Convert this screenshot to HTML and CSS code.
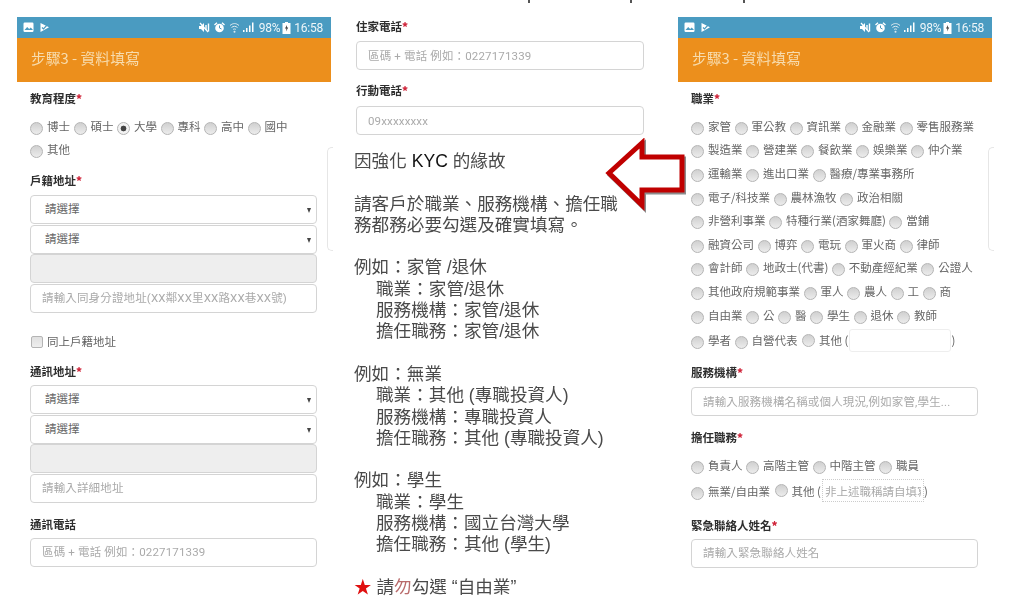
FILE: index.html
```html
<!DOCTYPE html>
<html lang="zh-Hant">
<head>
<meta charset="utf-8">
<title>步驟3 - 資料填寫</title>
<link rel="stylesheet" href="styles.css">
</head>
<body>
<svg class="defs" aria-hidden="true">
  <symbol id="status-left" viewBox="0 0 32 11">
    <rect x="0.5" y="0.5" width="10" height="9.5" rx="1.2" fill="#fff"/>
    <path d="M1.5 8l2.7-3 2 2 1.6-1.4L10 8z" fill="#4a9bc1"/>
    <path d="M17.5 1l8.5 4.3-8.5 4.7z" fill="#fff"/>
    <path d="M19 5.5l1.5 1.5 4-4.500" fill="none" stroke="#4a9bc1" stroke-width="1.2"/>
  </symbol>
  <symbol id="status-right" viewBox="0 0 55 11">
    <path d="M0 4h2l3-3v9L2 7H0z" fill="#fff"/>
    <path d="M1 1l8 9" stroke="#fff" stroke-width="1.2"/>
    <path d="M7 3v5M9.5 1.500v8" stroke="#fff" stroke-width="1.4"/>
    <circle cx="20.5" cy="6" r="4.3" fill="#fff"/>
    <path d="M20.5 3.500V6l2 1" stroke="#4a9bc1" fill="none"/>
    <path d="M15.5 3l2.500-2.300M25.500 3L23 .7" stroke="#fff" stroke-width="1.4"/>
    <path d="M31 3.500c3-2.600 6-2.600 9 0M32.500 5.500c2-1.600 4-1.600 6 0M34 7.500c1-.7 2-.7 3 0" fill="none" stroke="#dbe9ef" stroke-width="1"/>
    <circle cx="35.500" cy="9.700" r="1" fill="#dbe9ef"/>
    <path d="M44 10h1.500V8H44zM47 10h1.500V6H47zM50 10h1.500V3.500H50zM53 10h1.500V.5H53z" fill="#fff"/>
  </symbol>
  <symbol id="battery" viewBox="0 0 9 12">
    <path d="M3 0h3v1h2.500v11H.5V1H3z" fill="#fff"/>
    <path d="M5 3L3 6.500h1.500L4 9.500l2.200-4H4.800z" fill="#333"/>
  </symbol>
</svg>

<span class="cut-mark cut-a"></span>
<span class="cut-mark cut-b"></span>
<span class="cut-mark cut-c"></span>

<main class="page">
  <section class="phone">
    <div class="status">
      <svg class="ico-left"><use href="#status-left"/></svg>
      <svg class="ico-right"><use href="#status-right"/></svg>
      <span class="status-pct">98%</span>
      <svg class="ico-batt"><use href="#battery"/></svg>
      <span class="status-time">16:58</span>
    </div>
    <header class="appbar">步驟3 - 資料填寫</header>
    <div class="form">
      <div class="label first">教育程度<b>*</b></div>
      <div class="options">
        <div class="row">
          <label class="opt"><input type="radio" name="edu">博士</label>
          <label class="opt"><input type="radio" name="edu">碩士</label>
          <label class="opt"><input type="radio" name="edu" checked>大學</label>
          <label class="opt"><input type="radio" name="edu">專科</label>
          <label class="opt"><input type="radio" name="edu">高中</label>
          <label class="opt"><input type="radio" name="edu">國中</label>
        </div>
        <div class="row"><label class="opt"><input type="radio" name="edu">其他</label></div>
      </div>
      <div class="label sec-a">戶籍地址<b>*</b></div>
      <div class="select">請選擇</div>
      <div class="select">請選擇</div>
      <div class="filled"></div>
      <input class="field" placeholder="請輸入同身分證地址(XX鄰XX里XX路XX巷XX號)">
      <label class="check"><input type="checkbox">同上戶籍地址</label>
      <div class="label sec-b">通訊地址<b>*</b></div>
      <div class="select">請選擇</div>
      <div class="select">請選擇</div>
      <div class="filled"></div>
      <input class="field" placeholder="請輸入詳細地址">
      <div class="label sec-c">通訊電話</div>
      <input class="field" placeholder="區碼 + 電話 例如：0227171339">
    </div>
    <span class="ghost"></span>
  </section>

  <section class="middle">
    <div class="label mid-first">住家電話<b>*</b></div>
    <input class="field" placeholder="區碼 + 電話 例如：0227171339">
    <div class="label mid-second">行動電話<b>*</b></div>
    <input class="field" placeholder="09xxxxxxxx">
    <div class="notice">
      <p>因強化 <span class="strong">KYC</span> 的緣故</p>
      <p class="blank"></p>
      <p>請客戶於職業、服務機構、擔任職務都務必要勾選及確實填寫。</p>
      <p class="blank"></p>
      <p>例如：家管 /退休</p>
      <p class="sub">職業：家管/退休</p>
      <p class="sub">服務機構：家管/退休</p>
      <p class="sub">擔任職務：家管/退休</p>
      <p class="blank"></p>
      <p>例如：無業</p>
      <p class="sub">職業：其他 (專職投資人)</p>
      <p class="sub">服務機構：專職投資人</p>
      <p class="sub">擔任職務：其他 (專職投資人)</p>
      <p class="blank"></p>
      <p>例如：學生</p>
      <p class="sub">職業：學生</p>
      <p class="sub">服務機構：國立台灣大學</p>
      <p class="sub">擔任職務：其他 (學生)</p>
      <p class="blank"></p>
      <p><span class="star">★</span> 請<span class="warn">勿</span>勾選 “自由業”</p>
    </div>
  </section>

  <section class="phone">
    <div class="status">
      <svg class="ico-left"><use href="#status-left"/></svg>
      <svg class="ico-right"><use href="#status-right"/></svg>
      <span class="status-pct">98%</span>
      <svg class="ico-batt"><use href="#battery"/></svg>
      <span class="status-time">16:58</span>
    </div>
    <header class="appbar">步驟3 - 資料填寫</header>
    <div class="form">
      <div class="label first">職業<b>*</b></div>
      <div class="options">
        <div class="row">
          <label class="opt"><input type="radio" name="job">家管</label>
          <label class="opt"><input type="radio" name="job">軍公教</label>
          <label class="opt"><input type="radio" name="job">資訊業</label>
          <label class="opt"><input type="radio" name="job">金融業</label>
          <label class="opt"><input type="radio" name="job">零售服務業</label>
        </div>
        <div class="row">
          <label class="opt"><input type="radio" name="job">製造業</label>
          <label class="opt"><input type="radio" name="job">營建業</label>
          <label class="opt"><input type="radio" name="job">餐飲業</label>
          <label class="opt"><input type="radio" name="job">娛樂業</label>
          <label class="opt"><input type="radio" name="job">仲介業</label>
        </div>
        <div class="row">
          <label class="opt"><input type="radio" name="job">運輸業</label>
          <label class="opt"><input type="radio" name="job">進出口業</label>
          <label class="opt"><input type="radio" name="job">醫療/專業事務所</label>
        </div>
        <div class="row">
          <label class="opt"><input type="radio" name="job">電子/科技業</label>
          <label class="opt"><input type="radio" name="job">農林漁牧</label>
          <label class="opt"><input type="radio" name="job">政治相關</label>
        </div>
        <div class="row">
          <label class="opt"><input type="radio" name="job">非營利事業</label>
          <label class="opt"><input type="radio" name="job">特種行業(酒家舞廳)</label>
          <label class="opt"><input type="radio" name="job">當鋪</label>
        </div>
        <div class="row">
          <label class="opt"><input type="radio" name="job">融資公司</label>
          <label class="opt"><input type="radio" name="job">博弈</label>
          <label class="opt"><input type="radio" name="job">電玩</label>
          <label class="opt"><input type="radio" name="job">軍火商</label>
          <label class="opt"><input type="radio" name="job">律師</label>
        </div>
        <div class="row">
          <label class="opt"><input type="radio" name="job">會計師</label>
          <label class="opt"><input type="radio" name="job">地政士(代書)</label>
          <label class="opt"><input type="radio" name="job">不動產經紀業</label>
          <label class="opt"><input type="radio" name="job">公證人</label>
        </div>
        <div class="row">
          <label class="opt"><input type="radio" name="job">其他政府規範事業</label>
          <label class="opt"><input type="radio" name="job">軍人</label>
          <label class="opt"><input type="radio" name="job">農人</label>
          <label class="opt"><input type="radio" name="job">工</label>
          <label class="opt"><input type="radio" name="job">商</label>
        </div>
        <div class="row">
          <label class="opt"><input type="radio" name="job">自由業</label>
          <label class="opt"><input type="radio" name="job">公</label>
          <label class="opt"><input type="radio" name="job">醫</label>
          <label class="opt"><input type="radio" name="job">學生</label>
          <label class="opt"><input type="radio" name="job">退休</label>
          <label class="opt"><input type="radio" name="job">教師</label>
        </div>
        <div class="row tall">
          <label class="opt"><input type="radio" name="job">學者</label>
          <label class="opt"><input type="radio" name="job">自營代表</label>
          <label class="opt raised"><input type="radio" name="job">其他 (<input class="inline-field" type="text">)</label>
        </div>
      </div>
      <div class="label sec-d">服務機構<b>*</b></div>
      <input class="field" placeholder="請輸入服務機構名稱或個人現況,例如家管,學生...">
      <div class="label sec-c">擔任職務<b>*</b></div>
      <div class="options role">
        <div class="row">
          <label class="opt"><input type="radio" name="role">負責人</label>
          <label class="opt"><input type="radio" name="role">高階主管</label>
          <label class="opt"><input type="radio" name="role">中階主管</label>
          <label class="opt"><input type="radio" name="role">職員</label>
        </div>
        <div class="row tall">
          <label class="opt"><input type="radio" name="role">無業/自由業</label>
          <label class="opt raised"><input type="radio" name="role">其他 (<input class="inline-field dotted" type="text" placeholder="非上述職稱請自填寫">)</label>
        </div>
      </div>
      <div class="label sec-e">緊急聯絡人姓名<b>*</b></div>
      <input class="field" placeholder="請輸入緊急聯絡人姓名">
    </div>
    <span class="ghost"></span>
  </section>
</main>

<svg class="arrow" viewBox="0 0 84 76" aria-hidden="true">
  <polygon points="5,35 38,5 38,19 78,19 78,52 38,52 38,67" fill="#fff" stroke="#8c8c8c" stroke-width="5" transform="translate(1.500 2)"/>
  <polygon points="5,35 38,5 38,19 78,19 78,52 38,52 38,67" fill="#fff" stroke="#c00000" stroke-width="5"/>
</svg>
</body>
</html>
```
FILE: styles.css
```css
* { box-sizing: border-box; }
html, body { margin: 0; height: 598px; overflow: hidden; background: #fff; }
body {
  font-family: "Noto Sans CJK TC", "Liberation Sans", sans-serif;
  font-size: 11.5px;
  color: #555;
  position: relative;
}
.defs { position: absolute; width: 0; height: 0; }
.page { display: flex; align-items: flex-start; height: 598px; filter: blur(.35px); }

.phone { width: 314px; margin-left: 17px; padding-top: 17px; position: relative; flex: none; }
.phone + .middle + .phone { margin-left: 0; }

.status {
  height: 21px;
  background: #4a9bc1;
  color: #eef6f9;
  display: flex;
  align-items: center;
  font-family: Roboto, sans-serif;
  font-size: 12px;
  letter-spacing: -.25px;
  padding-left: 6px;
}
.ico-left { width: 32px; height: 11px; }
.ico-right { width: 55px; height: 11px; margin-left: auto; }
.status-pct { margin-left: 5px; }
.ico-batt { width: 9px; height: 12px; margin-left: 2px; }
.status-time { margin: 0 8px 0 3px; }

.appbar {
  height: 44px;
  background: #ec8f1c;
  color: #f7dcae;
  font-size: 14.8px;
  line-height: 40px;
  padding-left: 14px;
}

.form { padding: 0 14px 0 13px; }
.label { font-weight: 700; font-size: 11.5px; line-height: 16px; color: #2e2e2e; }
.label b { color: #d0273c; }
.label.first { margin-top: 8px; }
.label.sec-a { margin-top: 11px; margin-bottom: 7px; }
.label.sec-b { margin-top: 14px; margin-bottom: 6px; }
.label.sec-c { margin-top: 13px; margin-bottom: 6px; }
.label.sec-d { margin-top: 10px; margin-bottom: 7px; }
.label.sec-e { margin-top: 12px; margin-bottom: 6px; }

.options { margin-top: 8px; }
.options.role { margin-top: 8px; }
.row { display: flex; height: 23.6px; align-items: center; white-space: nowrap; }
.row.tall { height: 28px; }
.opt { display: inline-flex; align-items: center; margin-right: 3.5px; color: #666; line-height: 16px; }
.opt input[type="radio"] {
  appearance: none;
  width: 13px;
  height: 13px;
  margin: 5px 4px 0 0;
  border-radius: 50%;
  border: 1px solid #b4b4b4;
  background: linear-gradient(#d0d0d0, #ececec);
  flex: none;
}
.opt input[type="radio"]:checked {
  background: radial-gradient(circle, #444 0 2.6px, #f2f2f2 3.2px);
}
.opt.raised input[type="radio"] { margin: 0 4px 0 1px; }

.inline-field {
  width: 102px;
  height: 23px;
  margin: 0 0 0 1px;
  padding: 0 2px;
  border: 1px solid #eee;
  border-radius: 3px;
  font: inherit;
  color: #555;
  outline: none;
}
.inline-field.dotted { border: 1px dotted #ccc; border-radius: 0; }
.inline-field::placeholder { color: #aaa; opacity: 1; }

.select, .filled, .field {
  display: block;
  width: 287px;
  height: 29px;
  border: 1px solid #d4d4d4;
  border-radius: 4px;
  background: #fff;
  margin-bottom: .6px;
  font-family: Roboto, "Noto Sans CJK TC", sans-serif;
  font-size: 11.5px;
}
.select {
  position: relative;
  padding-left: 14px;
  line-height: 27px;
  color: #666;
}
.select::after {
  content: "";
  position: absolute;
  right: 5px;
  top: 12px;
  border: 2.5px solid transparent;
  border-top: 5px solid #444;
  border-bottom: 0;
}
.filled { background: #eee; }
.field { padding: 0 11px; outline: none; color: #555; letter-spacing: .15px; }
.field::placeholder { color: #aaa; opacity: 1; }

.check {
  display: flex;
  align-items: center;
  height: 16px;
  margin-top: 20px;
  color: #666;
  white-space: nowrap;
}
.check input {
  appearance: none;
  width: 12px;
  height: 12px;
  margin: 3px 4px 0 1px;
  border: 1px solid #b4b4b4;
  border-radius: 2px;
  background: linear-gradient(#e0e0e0, #eee);
}

.ghost {
  position: absolute;
  left: 310px;
  top: 147px;
  width: 6px;
  height: 104px;
  border: 1px solid #e6e6e6;
  border-right: 0;
  border-radius: 5px 0 0 5px;
}

.middle { width: 347px; padding-left: 25px; flex: none; }
.middle .field { width: 288px; }
.middle .label { margin-bottom: 7px; }
.mid-first { margin-top: 18px; }
.middle .label.mid-second { margin-top: 12px; margin-bottom: 8px; }
.notice {
  margin: 16px 0 0 -2px;
  width: 268px;
  font-size: 17.6px;
  line-height: 21.3px;
  color: #4a4a4a;
  font-family: "Liberation Sans", "Noto Sans CJK TC", sans-serif;
}
.notice p { margin: 0; }
.notice .blank { height: 21.3px; }
.notice .sub { padding-left: 22px; }
.strong { color: #111; }
.star { color: #e01010; }
.warn { color: #b96a6a; }

.arrow { position: absolute; left: 604px; top: 138px; width: 84px; height: 76px; }
.cut-mark { position: absolute; top: 0; width: 2px; height: 3px; background: #555; }
.cut-a { left: 528px; }
.cut-b { left: 630px; }
.cut-c { left: 743px; }
```
